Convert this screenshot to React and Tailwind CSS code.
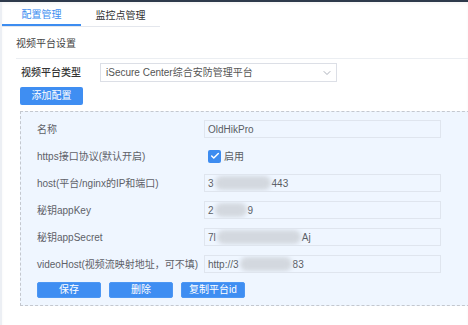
import { ChevronDown, Check } from 'lucide-react';

const font = { fontFamily: '"Liberation Sans", "Noto Sans CJK SC", sans-serif' };

const Blur = ({ w }) => (
  <span
    className="inline-block h-[14px] align-middle bg-[#d3d8df] rounded-full blur-[2px] mx-[1px]"
    style={{ width: w }}
  ></span>
);

const Field = ({ label, children }) => (
  <div className="flex items-center h-[18px]">
    <div className="w-[167px] text-[10px] text-[#5e6168] whitespace-nowrap">{label}</div>
    {children}
  </div>
);

const Input = ({ children }) => (
  <div className="w-[237px] h-[18px] border border-[#dfe5ee] flex items-center px-[3px] text-[10px] text-[#5a5d63] whitespace-nowrap overflow-hidden">
    {children}
  </div>
);

const Btn = ({ children }) => (
  <button className="w-[64px] h-[16px] bg-[#3f8ef2] border border-[#4d97f3] rounded-[2px] text-white text-[10px] leading-none">
    {children}
  </button>
);

const App = () => {
  return (
    <div className="w-[468px] h-[325px] overflow-hidden bg-white" style={font}>
      <div className="h-[2px] bg-[#2e3a4c]"></div>
      <div className="h-[323px] border-l-2 border-[#eceff4] shadow-[inset_0_2px_3px_rgba(0,0,0,0.04)]">
        {/* Tabs */}
        <div className="flex w-[158px] h-[25px] border-b border-[#e4e7ed]">
          <div className="w-[79px] pt-[3px] flex items-center justify-center text-[10px] text-[#3d8df0] border-b-2 border-[#3d8df0]">
            配置管理
          </div>
          <div className="w-[79px] pt-[3px] flex items-center justify-center text-[10px] text-[#303133]">
            监控点管理
          </div>
        </div>

        <div className="pl-[14px]">
          <div className="h-[32px] pt-[2px] flex items-center text-[10px] text-[#444] border-b border-[#ebeef2]">
            视频平台设置
          </div>

          <div className="pl-[4px] pt-[4px]">
            <div className="flex items-center h-[19px]">
              <div className="w-[80px] pl-[1px] text-[10px] font-medium text-[#333]">视频平台类型</div>
              <div className="w-[237px] h-[19px] border border-[#dcdfe6] flex items-center justify-between pl-[5px] pr-[3px] text-[10px] text-[#555]">
                <span>iSecure Center综合安防管理平台</span>
                <ChevronDown className="w-[12px] h-[12px] text-[#8f96a3]" strokeWidth={1.5} />
              </div>
            </div>

            <button className="mt-[4px] w-[63px] h-[18px] bg-[#3f8ef2] rounded-[2px] text-white text-[10px] leading-none">
              添加配置
            </button>

            <div className="mt-[5px] w-[460px] border border-dashed border-[#c4c8cf] bg-[#eff6ff] pl-[16px] pt-[8px] pb-[7px] flex flex-col gap-[9px]">
              <Field label="名称">
                <Input>OldHikPro</Input>
              </Field>
              <Field label="https接口协议(默认开启)">
                <div className="flex items-center pl-[4px]">
                  <span className="w-[13px] h-[13px] rounded-[2px] bg-[#3d8cf0] flex items-center justify-center">
                    <Check className="w-[10px] h-[10px] text-white" strokeWidth={3.5} />
                  </span>
                  <span className="ml-[3px] text-[10px] text-[#5a5d63]">启用</span>
                </div>
              </Field>
              <Field label="host(平台/nginx的IP和端口)">
                <Input>
                  3<Blur w={56} />443
                </Input>
              </Field>
              <Field label="秘钥appKey">
                <Input>
                  2<Blur w={32} />9
                </Input>
              </Field>
              <Field label="秘钥appSecret">
                <Input>
                  7l<Blur w={84} />Aj
                </Input>
              </Field>
              <Field label="videoHost(视频流映射地址，可不填)">
                <Input>
                  http://3<Blur w={52} />83
                </Input>
              </Field>
              <div className="flex gap-[8px]">
                <Btn>保存</Btn>
                <Btn>删除</Btn>
                <Btn>复制平台id</Btn>
              </div>
            </div>
          </div>
        </div>
      </div>
    </div>
  );
};

export default App;
